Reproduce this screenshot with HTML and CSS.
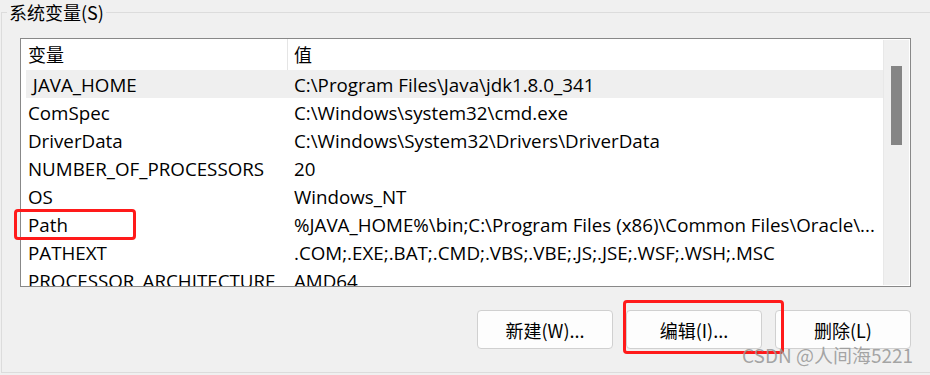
FILE: index.html
```html
<!DOCTYPE html>
<html lang="zh-CN">
<head>
    <meta charset="UTF-8">
    <title>系统变量</title>
    <link rel="stylesheet" href="styles.css">
</head>
<body>
    <div class="group">
        <div class="group-title">系统变量(S)</div>

        <div class="list">
            <div class="list-body">
                <div class="list-head">
                    <div class="head-cell">变量</div>
                    <div class="head-cell head-value">值</div>
                </div>
                <div class="row selected"><div class="cell-name"> JAVA_HOME</div><div class="cell-value">C:\Program Files\Java\jdk1.8.0_341</div></div>
                <div class="row"><div class="cell-name">ComSpec</div><div class="cell-value">C:\Windows\system32\cmd.exe</div></div>
                <div class="row"><div class="cell-name">DriverData</div><div class="cell-value">C:\Windows\System32\Drivers\DriverData</div></div>
                <div class="row"><div class="cell-name">NUMBER_OF_PROCESSORS</div><div class="cell-value">20</div></div>
                <div class="row"><div class="cell-name">OS</div><div class="cell-value">Windows_NT</div></div>
                <div class="row"><div class="cell-name">Path</div><div class="cell-value">%JAVA_HOME%\bin;C:\Program Files (x86)\Common Files\Oracle\...</div></div>
                <div class="row"><div class="cell-name">PATHEXT</div><div class="cell-value">.COM;.EXE;.BAT;.CMD;.VBS;.VBE;.JS;.JSE;.WSF;.WSH;.MSC</div></div>
                <div class="row"><div class="cell-name">PROCESSOR_ARCHITECTURE</div><div class="cell-value">AMD64</div></div>
            </div>
            <div class="scrollbar"><div class="thumb"></div></div>
        </div>

        <div class="buttons">
            <button class="btn">新建(W)...</button>
            <button class="btn">编辑(I)...</button>
            <button class="btn">删除(L)</button>
        </div>
    </div>

    <!-- red annotation boxes -->
    <div class="mark mark-path"></div>
    <div class="mark mark-edit"></div>
    <div class="watermark">CSDN @人间海5221</div>
</body>
</html>
```

FILE: styles.css
```css
body {
    margin: 0;
    background: #f0f0f0;
    font-family: "Open Sans", "Noto Sans CJK SC", sans-serif;
    font-size: 18px;
    color: #000;
    position: relative;
    height: 375px;
    overflow: hidden;
}
.group {
    margin: 12px 0 0 1px;
    width: 940px;
    height: 361px;
    box-sizing: border-box;
    border: 1px solid #dcdcdc;
}
.group-title {
    width: fit-content;
    margin: -13px 0 0 5px;
    padding: 0 2px;
    line-height: 24px;
    background: #f0f0f0;
    font-family: "Noto Sans CJK SC", sans-serif;
}
.list {
    display: flex;
    width: 891px;
    height: 249px;
    box-sizing: border-box;
    margin: 14px 0 0 18px;
    border: 1px solid #888;
    background: #fff;
}
.list-body {
    flex: 1;
    overflow: hidden;
}
.list-head {
    display: grid;
    grid-template-columns: 266px 1fr;
    height: 31px;
}
.head-cell {
    padding: 3px 0 0 7px;
    line-height: 24px;
    font-family: "Noto Sans CJK SC", sans-serif;
}
.head-value {
    border-left: 1px solid #e5e5e5;
    padding-left: 6px;
}
.row {
    display: grid;
    grid-template-columns: 261px 1fr;
    height: 28px;
    line-height: 29px;
    margin-left: 5px;
    font-size: 18.75px;
    white-space: pre;
}
.row.selected {
    background: #efefef;
}
.cell-name {
    padding-left: 2px;
    overflow: hidden;
}
.cell-value {
    padding-left: 7px;
    overflow: hidden;
}
.scrollbar {
    width: 25px;
    margin: 1px 1px 1px 0;
    border-left: 1px solid #e8e8e8;
    background: #f0f0f0;
}
.thumb {
    width: 11px;
    height: 79px;
    margin: 26px 0 0 7px;
    background: #858585;
}
.buttons {
    display: flex;
    gap: 13px;
    width: 891px;
    margin: 23px 0 0 18px;
    justify-content: flex-end;
}
.btn {
    width: 136px;
    height: 39px;
    background: #fdfdfd;
    border: 1px solid #d0d0d0;
    border-radius: 4px;
    font-family: "Noto Sans CJK SC", sans-serif;
    font-size: 18px;
    color: #000;
}
.mark {
    position: absolute;
    border: 3px solid #ff1a1a;
    border-radius: 4px;
    box-sizing: border-box;
}
.mark-path {
    left: 14px;
    top: 209px;
    width: 122px;
    height: 31px;
}
.mark-edit {
    left: 623px;
    top: 300px;
    width: 161px;
    height: 54px;
}
.watermark {
    position: absolute;
    left: 742px;
    top: 341px;
    font-family: "Noto Sans CJK SC", sans-serif;
    font-size: 19px;
    color: rgba(150, 150, 150, 0.85);
}
```
